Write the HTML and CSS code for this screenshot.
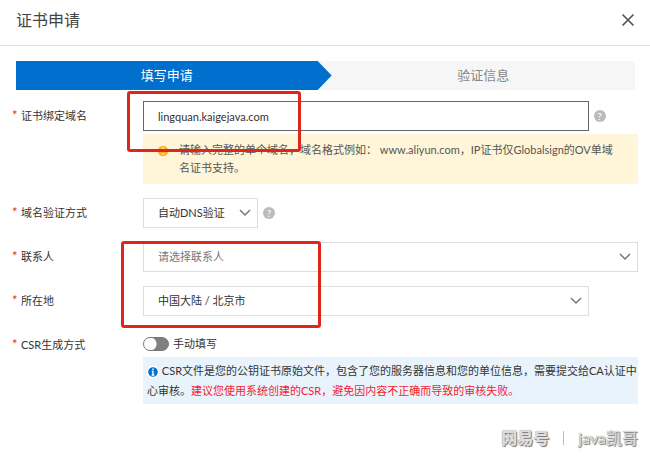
FILE: index.html
```html
<!DOCTYPE html>
<html lang="zh-CN">
<head>
    <meta charset="UTF-8">
    <meta name="viewport" content="width=device-width, initial-scale=1.0">
    <title>证书申请</title>
    <link rel="stylesheet" href="styles.css">
</head>
<body>
    <div class="dialog">
        <header class="dialog-header">
            <h1>证书申请</h1>
            <button class="close-button" type="button" aria-label="关闭">
                <svg width="14" height="14" viewBox="0 0 14 14"><path d="M1.5 1.5l11 11M12.5 1.5l-11 11"/></svg>
            </button>
        </header>

        <ol class="steps">
            <li class="step active">填写申请</li>
            <li class="step">验证信息</li>
        </ol>

        <form class="form">
            <div class="row">
                <label class="label" for="domain">证书绑定域名</label>
                <div class="field">
                    <div class="control">
                        <input class="box text-input" id="domain" type="text" value="lingquan.kaigejava.com">
                        <span class="help">?</span>
                    </div>
                    <div class="tip">
                        <svg class="tip-icon" width="12" height="12" viewBox="0 0 12 12"><circle cx="6" cy="6" r="6"/><path d="M6 2.5v4M6 8v1.5"/></svg>
                        <p>请输入完整的单个域名，域名格式例如： www.aliyun.com，IP证书仅Globalsign的OV单域名证书支持。</p>
                    </div>
                </div>
            </div>

            <div class="row">
                <label class="label" for="method">域名验证方式</label>
                <div class="field control">
                    <div class="select auto">
                        <select class="box" id="method">
                            <option>自动DNS验证</option>
                        </select>
                        <svg class="arrow" width="12" height="8" viewBox="0 0 12 8"><path d="M1 1l5 5 5-5"/></svg>
                    </div>
                    <span class="help">?</span>
                </div>
            </div>

            <div class="row">
                <label class="label" for="contact">联系人</label>
                <div class="field">
                    <div class="select">
                        <select class="box placeholder" id="contact">
                            <option>请选择联系人</option>
                        </select>
                        <svg class="arrow" width="12" height="8" viewBox="0 0 12 8"><path d="M1 1l5 5 5-5"/></svg>
                    </div>
                </div>
            </div>

            <div class="row">
                <label class="label" for="location">所在地</label>
                <div class="field">
                    <div class="select short">
                        <select class="box" id="location">
                            <option>中国大陆 / 北京市</option>
                        </select>
                        <svg class="arrow" width="12" height="8" viewBox="0 0 12 8"><path d="M1 1l5 5 5-5"/></svg>
                    </div>
                </div>
            </div>

            <div class="row">
                <label class="label" for="csr">CSR生成方式</label>
                <div class="field">
                    <label class="switch-label">
                        <input class="switch" id="csr" type="checkbox">
                        手动填写
                    </label>
                    <p class="info">
                        <svg class="info-icon" width="12" height="12" viewBox="0 0 12 12"><circle cx="6" cy="6" r="5.5"/><path d="M6 2.4v1.6M4.8 5.4H6v3.4M4.6 9h2.8"/></svg>
                        CSR文件是您的公钥证书原始文件，包含了您的服务器信息和您的单位信息，需要提交给CA认证中心审核。<span class="warn">建议您使用系统创建的CSR，避免因内容不正确而导致的审核失败。</span>
                    </p>
                </div>
            </div>
        </form>

        <footer class="watermark">
            <span class="brand">网易号</span>
            <span class="divider"></span>
            <span class="author">java凯哥</span>
        </footer>

        <div class="mark mark-domain"></div>
        <div class="mark mark-contact"></div>
    </div>
</body>
</html>
```
FILE: styles.css
```css
* {
    box-sizing: border-box;
}
body {
    margin: 0;
    background: #fff;
    color: #333;
    font-family: Lato, "Noto Sans CJK SC", sans-serif;
    font-size: 11px;
    line-height: 20px;
}
p, h1, ol {
    margin: 0;
    padding: 0;
}
.dialog {
    position: relative;
}
.dialog-header {
    display: flex;
    justify-content: space-between;
    align-items: center;
    height: 46px;
    padding: 0 15px 6px 16px;
    border-bottom: 1px solid #dedede;
}
.dialog-header h1 {
    font-size: 16px;
    font-weight: 400;
    color: #444;
}
.close-button {
    display: flex;
    padding: 0;
    border: none;
    background: none;
    cursor: pointer;
}
.close-button svg {
    fill: none;
    stroke: #555;
    stroke-width: 1.7;
}

/* steps */
.steps {
    display: flex;
    margin: 15px 15px 0 16px;
    background: #f6f6f6;
    list-style: none;
}
.step {
    flex: 1;
    height: 29px;
    font-size: 13px;
    line-height: 29px;
    text-align: center;
    color: #888;
}
.step.active {
    flex: none;
    width: 51%;
    padding-right: 14px;
    background: #006fcd;
    color: #fff;
    clip-path: polygon(0 0, calc(100% - 14px) 0, 100% 50%, calc(100% - 14px) 100%, 0 100%);
}

/* form */
.form {
    display: flex;
    flex-direction: column;
    gap: 14px;
    padding: 11px 12px 0 12px;
}
.row {
    display: grid;
    grid-template-columns: 131px 1fr;
}
.label {
    line-height: 30px;
}
.label::before {
    content: "*";
    display: inline-block;
    width: 9px;
    color: #d93026;
    font-size: 13px;
    line-height: 13px;
}
.control {
    display: flex;
    align-items: center;
    gap: 5px;
}
.box {
    width: 100%;
    height: 30px;
    padding: 0 14px;
    border: 1px solid #ddd;
    border-radius: 0;
    background: #fff;
    color: #333;
    font: inherit;
    appearance: none;
}
.text-input {
    width: 90%;
    border-color: #666;
}
.box.placeholder {
    color: #777;
}
.select {
    position: relative;
}
.select.short {
    width: 90%;
}
.select.auto .box {
    padding-right: 32px;
}
.arrow {
    position: absolute;
    top: 11px;
    right: 7px;
    fill: none;
    stroke: #777;
    stroke-width: 1.5;
    pointer-events: none;
}
.help {
    width: 12px;
    height: 12px;
    border-radius: 50%;
    background: #bbb;
    color: #fff;
    font-size: 10px;
    line-height: 12px;
    text-align: center;
}
.tip {
    display: flex;
    gap: 10px;
    margin-top: 3px;
    padding: 7px 20px 7px 14px;
    background: #fff5d9;
    color: #555;
    line-height: 18px;
}
.tip-icon {
    flex: none;
    margin-top: 4px;
    fill: #ffb32c;
    stroke: #fff5d9;
    stroke-width: 1.5;
}

/* switch */
.switch-label {
    display: flex;
    align-items: center;
    gap: 4px;
    height: 27px;
}
.switch {
    width: 26px;
    height: 14px;
    margin: 0;
    border: 1px solid #777;
    border-radius: 7px;
    background: radial-gradient(circle at 6px 6px, #fff 6px, #808080 7px);
    appearance: none;
}
.switch:checked {
    background: radial-gradient(circle at 18px 6px, #fff 6px, #006fcd 7px);
}
.info {
    padding: 4px 0 3px 4px;
    background: #e8f3fc;
}
.info-icon {
    vertical-align: -3px;
    fill: #006fcd;
    stroke: #fff;
    stroke-width: 1.4;
}
.warn {
    color: #f5222d;
}

.watermark {
    display: flex;
    justify-content: flex-end;
    align-items: center;
    padding: 24px 12px 8px;
    color: #ddd;
    font-size: 16px;
    text-shadow: 1px 1px 1px #777, 0 0 1px #888;
}
.brand {
    font-weight: 900;
}
.divider {
    width: 1px;
    height: 14px;
    margin: 0 14px;
    background: #bbb;
}

/* red highlight frames */
.mark {
    position: absolute;
    border: 3px solid #de261c;
    border-radius: 3px;
}
.mark-domain {
    top: 91px;
    left: 127px;
    width: 174px;
    height: 61px;
}
.mark-contact {
    top: 241px;
    left: 121px;
    width: 200px;
    height: 87px;
}
```
